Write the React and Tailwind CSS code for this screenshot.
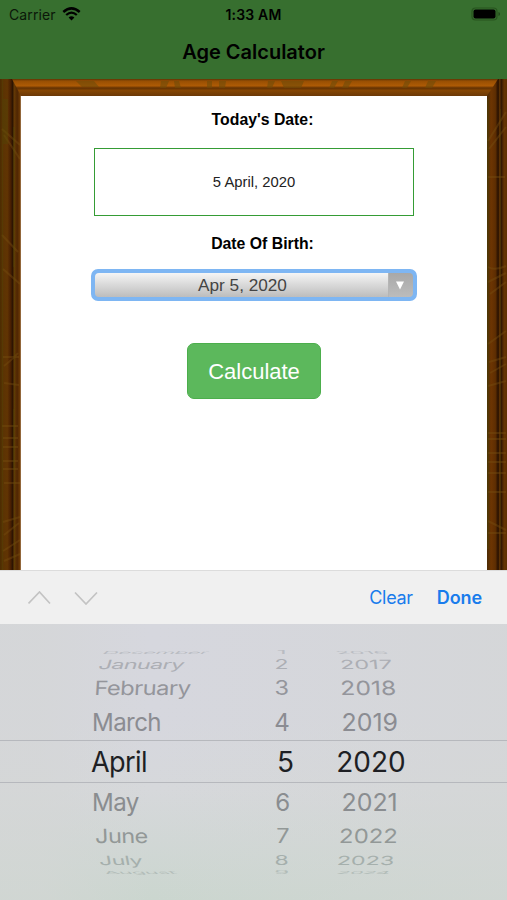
const months = [
    { text: "December", row: "h-[8px]", look: "origin-left scale-x-[0.8] scale-y-[0.15] -skew-x-12 translate-x-[12px] text-[#b9bcc2]" },
    { text: "January", row: "h-[16px]", look: "origin-left scale-x-[0.83] scale-y-[0.45] -skew-x-10 translate-x-[8px] text-[#acaeb4]" },
    { text: "February", row: "h-[32px]", look: "origin-left scale-x-[0.85] scale-y-[0.7] -skew-x-3 translate-x-[3.500px] text-[#94959b]" },
    { text: "March", row: "h-[36px]", look: "origin-left scale-x-[0.86] scale-y-[0.86] translate-x-[1px] text-[#8b8c92]" },
    { text: "April", row: "h-[43px]", look: "origin-left scale-x-[0.97] text-[#1e1f24]" },
    { text: "May", row: "h-[37px]", look: "origin-left scale-x-[0.86] scale-y-[0.86] translate-x-[1px] text-[#8a8d90]" },
    { text: "June", row: "h-[32px]", look: "origin-left scale-x-[0.84] scale-y-[0.7] skew-x-2 translate-x-[4px] text-[#929897]" },
    { text: "July", row: "h-[16px]", look: "origin-left scale-x-[0.82] scale-y-[0.45] skew-x-6 translate-x-[8px] text-[#a5afac]" },
    { text: "August", row: "h-[8px]", look: "origin-left scale-x-[0.8] scale-y-[0.15] skew-x-12 translate-x-[13px] text-[#b2bcb8]" },
];

const days = [
    { text: "1", row: "h-[8px]", look: "scale-x-[0.86] scale-y-[0.15] -translate-x-[8px] text-[#b9bcc2]" },
    { text: "2", row: "h-[16px]", look: "scale-x-[0.82] scale-y-[0.45] -translate-x-[5px] text-[#acaeb4]" },
    { text: "3", row: "h-[32px]", look: "scale-x-[0.84] scale-y-[0.7] -translate-x-[5px] text-[#94959b]" },
    { text: "4", row: "h-[36px]", look: "scale-x-[0.86] scale-y-[0.86] -translate-x-[4px] text-[#8b8c92]" },
    { text: "5", row: "h-[43px]", look: "-translate-x-[1px] text-[#1e1f24]" },
    { text: "6", row: "h-[37px]", look: "scale-x-[0.86] scale-y-[0.86] -translate-x-[4px] text-[#8a8d90]" },
    { text: "7", row: "h-[32px]", look: "scale-x-[0.84] scale-y-[0.7] -translate-x-[4px] text-[#929897]" },
    { text: "8", row: "h-[16px]", look: "scale-x-[0.82] scale-y-[0.45] -translate-x-[5px] text-[#a5afac]" },
    { text: "9", row: "h-[8px]", look: "scale-x-[0.86] scale-y-[0.15] -translate-x-[5px] text-[#b2bcb8]" },
];

const years = [
    { text: "2016", row: "h-[8px]", look: "scale-x-[0.82] scale-y-[0.15] skew-x-12 -translate-x-[9px] text-[#b9bcc2]" },
    { text: "2017", row: "h-[16px]", look: "scale-x-[0.84] scale-y-[0.45] skew-x-3 -translate-x-[5px] text-[#acaeb4]" },
    { text: "2018", row: "h-[32px]", look: "scale-x-[0.88] scale-y-[0.7] skew-x-2 -translate-x-[2.500px] text-[#94959b]" },
    { text: "2019", row: "h-[36px]", look: "scale-x-[0.89] scale-y-[0.86] -translate-x-[1px] text-[#8b8c92]" },
    { text: "2020", row: "h-[43px]", look: "text-[#1e1f24]" },
    { text: "2021", row: "h-[37px]", look: "scale-x-[0.89] scale-y-[0.86] -translate-x-[1px] text-[#8a8d90]" },
    { text: "2022", row: "h-[32px]", look: "scale-x-[0.85] scale-y-[0.7] -skew-x-2 -translate-x-[3px] text-[#929897]" },
    { text: "2023", row: "h-[16px]", look: "scale-x-[0.83] scale-y-[0.45] -skew-x-3 -translate-x-[5px] text-[#a5afac]" },
    { text: "2024", row: "h-[8px]", look: "scale-x-[0.76] scale-y-[0.15] -skew-x-12 -translate-x-[7px] text-[#b2bcb8]" },
];

function WheelColumn({ items, className }) {
    return (
        <div className={`flex flex-col ${className}`}>
            {items.map((item) => (
                <div key={item.text} className={`flex items-center ${item.row}`}>
                    <span className={`block whitespace-nowrap text-[28px] leading-none ${item.look}`}>
                        {item.text}
                    </span>
                </div>
            ))}
        </div>
    );
}

// Wooden picture frame drawn behind the white sheet
function WoodFrame() {
    return (
        <svg
            className="absolute inset-0 h-full w-full"
            viewBox="0 0 507 491"
            preserveAspectRatio="none"
            aria-hidden="true"
        >
            <defs>
                <linearGradient id="woodLeft" x1="0" x2="1" y1="0" y2="0">
                    <stop offset="0" stopColor="#4b2c02" />
                    <stop offset="0.12" stopColor="#5a3303" />
                    <stop offset="0.35" stopColor="#613403" />
                    <stop offset="0.5" stopColor="#4a2002" />
                    <stop offset="0.6" stopColor="#2c1402" />
                    <stop offset="0.68" stopColor="#643905" />
                    <stop offset="0.82" stopColor="#4f2603" />
                    <stop offset="0.95" stopColor="#6b3905" />
                    <stop offset="1" stopColor="#8b5b25" />
                </linearGradient>
                <linearGradient id="woodRight" x1="0" x2="1" y1="0" y2="0">
                    <stop offset="0" stopColor="#4a2a05" />
                    <stop offset="0.2" stopColor="#6d3502" />
                    <stop offset="0.42" stopColor="#5e2e02" />
                    <stop offset="0.56" stopColor="#260f01" />
                    <stop offset="0.63" stopColor="#5c3204" />
                    <stop offset="0.72" stopColor="#321701" />
                    <stop offset="0.86" stopColor="#643402" />
                    <stop offset="1" stopColor="#5d3002" />
                </linearGradient>
                <linearGradient id="woodTop" x1="0" x2="0" y1="0" y2="1">
                    <stop offset="0" stopColor="#5e3405" />
                    <stop offset="0.12" stopColor="#984f03" />
                    <stop offset="0.4" stopColor="#ad5b05" />
                    <stop offset="0.53" stopColor="#623103" />
                    <stop offset="0.68" stopColor="#854603" />
                    <stop offset="1" stopColor="#6b3907" />
                </linearGradient>
            </defs>
            <rect x="0" y="0" width="21" height="491" fill="url(#woodLeft)" />
            <rect x="487" y="0" width="20" height="491" fill="url(#woodRight)" />
            <path d="M12 0H498L487 17H21Z" fill="url(#woodTop)" />
            <g fill="#6f4b08" opacity="0.6">
                <path d="M76 2h18l5 6h-17zM161 2h8l-3 7h-6zM174 2h5l2 7h-6zM207 2h5v7h-5zM219 2h7l-1 7h-6zM268 2h7l-3 7h-5zM281 2h23l-3 7h-17zM332 2h6l-4 7h-5zM345 2h7l-4 7h-6zM405 2h6l-4 7h-5zM428 2h8l-4 7h-7z" />
            </g>
            <g fill="none" stroke="#775011" strokeWidth="2" opacity="0.4">
                <path d="M2 50L20 66M4 56L20 80M2 156L18 173M3 190L20 205M3 278H19M4 287Q14 279 18 274M4 304L19 306M2 347H18M3 359H18M3 368H18M3 382H18M3 390H18M4 404H20M3 443L20 438M4 456L19 444M3 472L20 461M4 482L20 475" />
                <path d="M488 62L506 33M489 70L506 48M488 98H505M488 188Q495 192 506 187M488 203L506 194M490 215L506 203M488 265L506 252M489 283L506 278M490 294L506 285M488 307L506 302M488 354H506M488 360H506M488 374H506M488 383H506M488 394H506M488 413H506M488 442L506 451M488 454H506" />
            </g>
            <g fill="#4c4d05" opacity="0.3">
                <path d="M2 0h1v491h-1zM13 48h2v140h-2zM13 330h2v60h-2zM3 20h5v45h-5zM14 100h1v391h-1zM487 20h2v450h-2zM500 30h1v440h-1z" />
            </g>
            <path d="M21 17V491" stroke="#a98261" strokeWidth="1" />
            <path d="M486.500 17V491" stroke="#b5a18a" strokeWidth="1" />
        </svg>
    );
}

function App() {
    return (
        <div className="flex h-[900px] w-[507px] flex-col overflow-hidden bg-white font-['Inter',sans-serif]">
            {/* Status bar and title */}
            <header className="h-[79px] shrink-0 bg-[#376f2f] text-black">
                <div className="grid h-[28px] grid-cols-3 items-center">
                    <div className="flex items-center gap-[6px] pl-[9px] text-[14px] text-[#0b1709]">
                        <span className="tracking-[0.1px]">Carrier</span>
                        <svg className="h-[14px] w-[19px]" viewBox="0 0 19 14" fill="none" stroke="#000" aria-hidden="true">
                            <path d="M1.300 5Q9.500 -2.200 17.700 5" strokeWidth="2.500" />
                            <path d="M4.200 8Q9.500 3.300 14.800 8" strokeWidth="2.300" />
                            <path d="M6.600 10.500Q9.500 8 12.400 10.500L9.500 13.400Z" fill="#000" stroke="none" />
                        </svg>
                    </div>
                    <span className="text-center text-[14px] font-semibold tracking-[0.2px]">1:33 AM</span>
                    <div className="flex justify-end pr-[6px]">
                        <svg className="h-[14px] w-[30px]" viewBox="0 0 30 14" aria-hidden="true">
                            <rect x="1" y="1" width="25" height="12" rx="3.500" fill="none" stroke="#28551f" strokeWidth="1.200" />
                            <rect x="2.500" y="2.500" width="22" height="9" rx="2" fill="#000" />
                            <path d="M27.500 5v4q1.500-.5 1.500-2t-1.500-2z" fill="#204719" />
                        </svg>
                    </div>
                </div>
                <h1 className="flex h-[48px] items-center justify-center text-[20px] font-semibold">
                    Age Calculator
                </h1>
            </header>

            {/* Framed form */}
            <main className="relative h-[491px] shrink-0 pl-[21px] pr-[20px] pt-[17px]">
                <WoodFrame />
                <div className="relative flex h-full flex-col items-center bg-white font-['Liberation_Sans',Arial,sans-serif]">
                    <h2 className="mt-[14px] ml-[17px] text-[15.800px] leading-5 font-bold text-black">
                        Today's Date:
                    </h2>
                    <div className="mt-[18px] flex h-[68px] w-[320px] items-center justify-center border border-[#359c35] text-[14.800px] text-[#222]">
                        5 April, 2020
                    </div>
                    <h2 className="mt-[18px] ml-[17px] text-[15.800px] leading-5 font-bold text-black">
                        Date Of Birth:
                    </h2>
                    <div className="mt-[15px] flex h-[32px] w-[326px] rounded-[7px] border-4 border-[#7eb6f3] bg-[#7eb6f3]">
                        <div className="flex flex-1 items-center justify-center rounded-l-[4px] bg-linear-to-b from-[#f5f5f5] to-[#bdbdbd] pt-[2px] pl-[2px] text-[17.200px] text-[#444]">
                            Apr 5, 2020
                        </div>
                        <div className="flex w-[25px] items-center justify-center rounded-r-[4px] border-l border-[#b5b5b5] bg-linear-to-b from-[#a8a8a8] to-[#bcbcbc]">
                            <svg className="mr-[2px] h-[9px] w-[10px]" viewBox="0 0 10 9" aria-hidden="true">
                                <path d="M1 .5H9L5 8.500Z" fill="#fff" />
                            </svg>
                        </div>
                    </div>
                    <button className="mt-[42px] h-[56px] w-[134px] rounded-[7px] border border-[#4cae4c] bg-[#5cb85c] text-[22px] text-white">
                        Calculate
                    </button>
                </div>
            </main>

            {/* Keyboard accessory bar */}
            <div className="flex h-[54px] shrink-0 items-center border-t border-[#dcdcdc] bg-[#f0f0f0] pl-[28px] pr-[25px] text-[18px] text-[#197cec]">
                <svg className="h-[14px] w-[70px]" viewBox="0 0 70 14" fill="none" stroke="#c3c3c3" strokeWidth="1.700" aria-hidden="true">
                    <path d="M.5 12.500L11.500 1L22 12.500" />
                    <path d="M47 1.500L58 13L69 1.500" />
                </svg>
                <span className="ml-auto tracking-[-0.300px]">Clear</span>
                <span className="ml-[24px] font-semibold tracking-[-0.100px]">Done</span>
            </div>

            {/* Date wheel */}
            <div className="relative h-[276px] shrink-0 bg-linear-to-b from-[#d6d7de] from-35% via-[#d6d8db] via-60% to-[#cbd6cf] pt-[24px]">
                <div className="absolute inset-0 bg-linear-to-r from-[#d4d6d5] from-8% via-transparent via-30% to-[#d4d6d5] to-100% opacity-60" />
                <div className="absolute inset-x-0 top-[116px] h-[43px] border-y border-[#b6b8bd]" />
                <div className="relative flex pl-[91px]">
                    <WheelColumn items={months} className="w-[130px] items-start tracking-[-0.700px]" />
                    <WheelColumn items={days} className="w-[74px] items-end" />
                    <WheelColumn items={years} className="ml-[36px] w-[80px] items-center" />
                </div>
            </div>
        </div>
    );
}

export default App;
